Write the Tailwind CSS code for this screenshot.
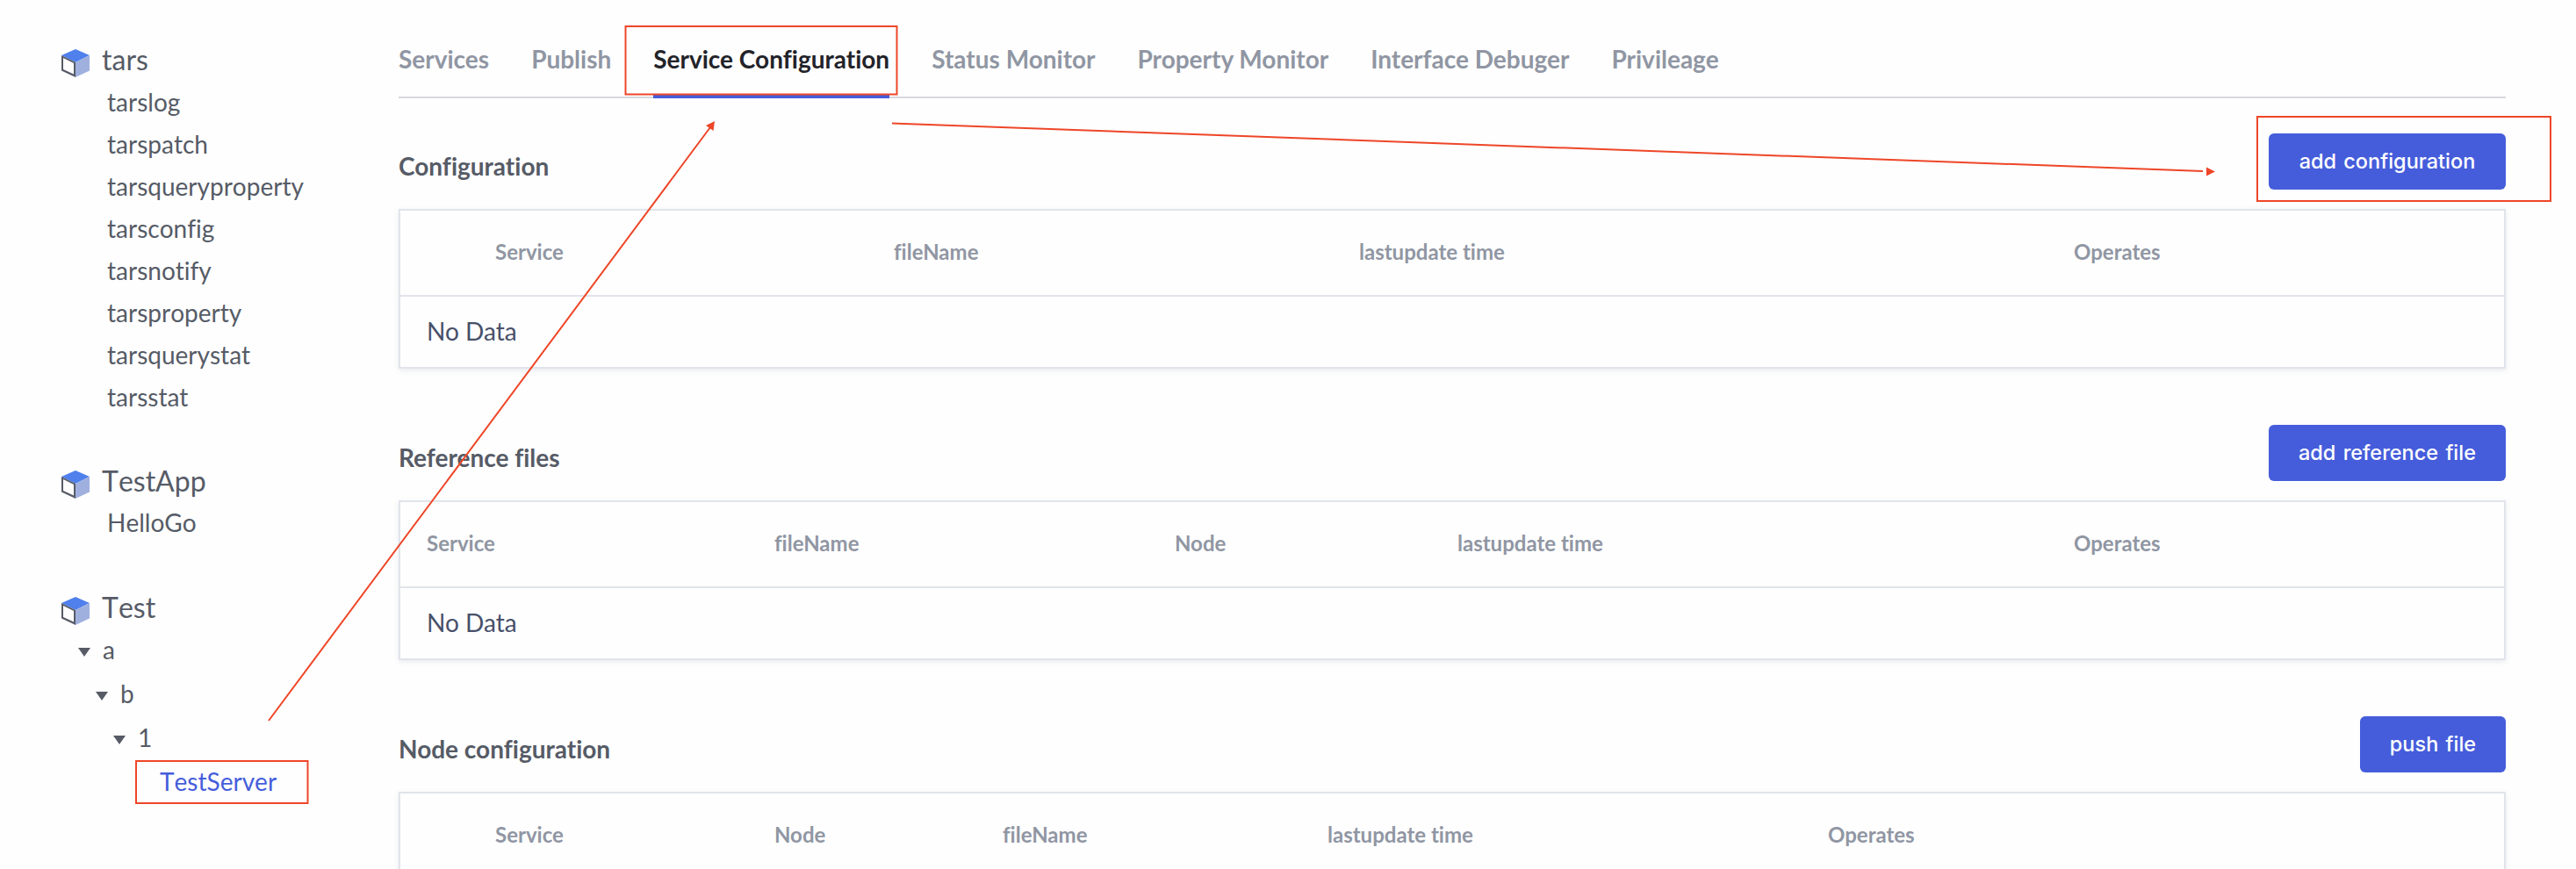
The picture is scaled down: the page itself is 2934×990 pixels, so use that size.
<!DOCTYPE html>
<html lang="en">
<head>
<meta charset="utf-8">
<title>Service Configuration</title>
<script src="https://cdn.jsdelivr.net/npm/@tailwindcss/browser@4"></script>
</head>
<body class="relative flex h-[990px] w-[2934px] overflow-hidden bg-[#fefefe] font-['Lato',sans-serif] text-[28px] text-[#565b66] [font-variant-ligatures:none]">
<svg class="hidden">
  <symbol id="cube" viewBox="0 0 32 32">
    <path fill="#4f80ec" d="M16 0 32 7 16 15 0 7z"/>
    <path fill="#a0b0de" d="M32 7v17.500L16 32V15z"/>
    <path fill="#565b66" d="M0 7l16 8v17L0 24.500z"/>
    <path fill="#fefefe" d="M2 10l12 6v12.600L2 23z"/>
  </symbol>
  <symbol id="caret" viewBox="0 0 14 10"><path fill="#565b66" d="M0 0h14L7 10z"/></symbol>
</svg>

<aside class="w-[454px] shrink-0 pt-[44px] pl-[70px] [font-kerning:none]">
  <section class="h-[480px]">
    <h2 class="flex h-[48px] items-center gap-[14px] text-[32px]"><svg class="mt-[8px] size-8"><use href="#cube"/></svg>tars</h2>
    <ul class="pl-[52px] leading-[48px]">
      <li>tarslog</li><li>tarspatch</li><li>tarsqueryproperty</li><li>tarsconfig</li><li>tarsnotify</li><li>tarsproperty</li><li>tarsquerystat</li><li>tarsstat</li>
    </ul>
  </section>
  <section class="h-[144px]">
    <h2 class="flex h-[48px] items-center gap-[14px] text-[32px]"><svg class="mt-[8px] size-8"><use href="#cube"/></svg>TestApp</h2>
    <ul class="pl-[52px] leading-[47px]"><li>HelloGo</li></ul>
  </section>
  <section>
    <h2 class="flex h-[48px] items-center gap-[14px] text-[32px]"><svg class="mt-[8px] size-8"><use href="#cube"/></svg>Test</h2>
    <ul class="leading-[49px]">
      <li class="flex h-[50px] items-start gap-[14px] pl-[19px]"><svg class="mt-[22px] h-[10px] w-[14px]"><use href="#caret"/></svg>a</li>
      <li class="flex h-[50px] items-start gap-[14px] pl-[39px]"><svg class="mt-[22px] h-[10px] w-[14px]"><use href="#caret"/></svg>b</li>
      <li class="flex h-[50px] items-start gap-[14px] pl-[59px]"><svg class="mt-[22px] h-[10px] w-[14px]"><use href="#caret"/></svg>1</li>
      <li class="pl-[112px] leading-[48px] text-[#455ddb]">TestServer</li>
    </ul>
  </section>
</aside>

<main class="w-[2400px] shrink-0 pt-[26px]">
  <nav class="flex h-[86px] gap-[48px] border-b-2 border-[#d7d8df] font-bold leading-[82px] text-[#9096a3]">
    <a>Services</a>
    <a>Publish</a>
    <a class="h-[86px] border-b-4 border-[#455ddb] text-[#222329]">Service Configuration</a>
    <a>Status Monitor</a>
    <a>Property Monitor</a>
    <a>Interface Debuger</a>
    <a>Privileage</a>
  </nav>

  <section class="mt-[40px] h-[332px]">
    <header class="flex h-[64px] justify-between">
      <h3 class="pt-[13px] font-bold leading-[48px]">Configuration</h3>
      <button class="h-[64px] w-[270px] rounded-[6px] bg-[#455ddb] font-['Inter',sans-serif] text-[23.5px] font-medium [word-spacing:2px] text-white">add configuration</button>
    </header>
    <div class="mt-[22px] h-[182px] border-2 border-[#e1e4eb] shadow-[0_2px_6px_rgba(70,80,120,0.12)]">
      <div class="flex h-[98px] border-b-2 border-[#e1e4eb] pl-[108px] text-[24px] font-bold leading-[94px] text-[#9096a3]">
        <span class="w-[454px]">Service</span><span class="w-[530px]">fileName</span><span class="w-[814px]">lastupdate time</span><span>Operates</span>
      </div>
      <div class="pl-[30px] leading-[79px] text-[#48506a]">No Data</div>
    </div>
  </section>

  <section class="h-[332px]">
    <header class="flex h-[64px] justify-between">
      <h3 class="pt-[13px] font-bold leading-[48px]">Reference files</h3>
      <button class="h-[64px] w-[270px] rounded-[6px] bg-[#455ddb] font-['Inter',sans-serif] text-[23.5px] font-medium [word-spacing:2px] text-white">add reference file</button>
    </header>
    <div class="mt-[22px] h-[182px] border-2 border-[#e1e4eb] shadow-[0_2px_6px_rgba(70,80,120,0.12)]">
      <div class="flex h-[98px] border-b-2 border-[#e1e4eb] pl-[30px] text-[24px] font-bold leading-[94px] text-[#9096a3]">
        <span class="w-[396px]">Service</span><span class="w-[456px]">fileName</span><span class="w-[322px]">Node</span><span class="w-[702px]">lastupdate time</span><span>Operates</span>
      </div>
      <div class="pl-[30px] leading-[79px] text-[#48506a]">No Data</div>
    </div>
  </section>

  <section>
    <header class="flex h-[64px] justify-between">
      <h3 class="pt-[13px] font-bold leading-[48px]">Node configuration</h3>
      <button class="h-[64px] w-[166px] rounded-[6px] bg-[#455ddb] font-['Inter',sans-serif] text-[23.5px] font-medium [word-spacing:2px] text-white">push file</button>
    </header>
    <div class="mt-[22px] h-[88px] border-2 border-b-0 border-[#e1e4eb] shadow-[0_2px_6px_rgba(70,80,120,0.12)]">
      <div class="flex h-[86px] overflow-hidden pl-[108px] text-[24px] font-bold leading-[94px] text-[#9096a3]">
        <span class="w-[318px]">Service</span><span class="w-[260px]">Node</span><span class="w-[370px]">fileName</span><span class="w-[570px]">lastupdate time</span><span>Operates</span>
      </div>
    </div>
  </section>
</main>

<!-- Walkthrough annotations: boxes and arrows over the page -->
<svg class="pointer-events-none absolute inset-0" width="2934" height="990" fill="none" stroke="#ee4628" stroke-width="2">
  <rect x="155" y="867" width="195.500" height="48"/>
  <rect x="712.500" y="30" width="309" height="77.500"/>
  <rect x="2571" y="133" width="334" height="96"/>
  <path d="M306 821 809 145M1016 140.500 2509 195"/>
  <path stroke="none" fill="#ee4628" d="M814 138l-1.500 11-8.500-6zM2513 190.500v10l10-5z"/>
</svg>
</body>
</html>
